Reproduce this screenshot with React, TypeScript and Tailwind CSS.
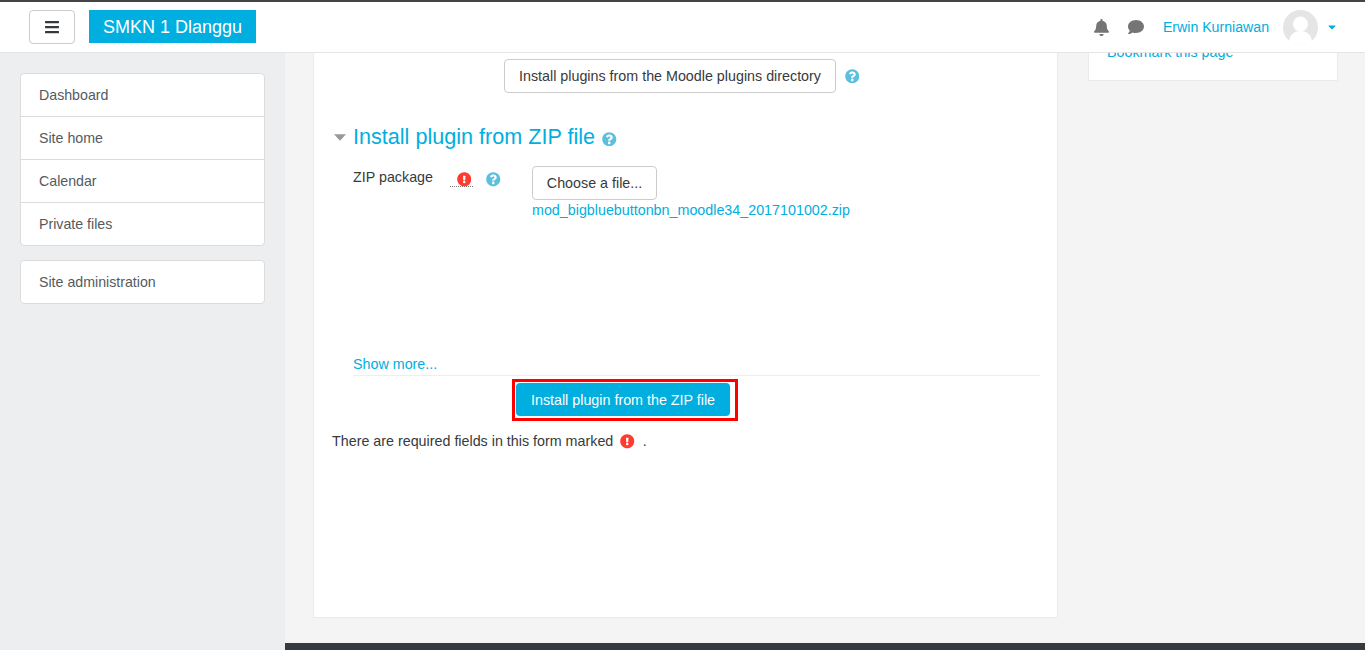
import { FaBars, FaBell, FaComment, FaCaretDown, FaQuestionCircle, FaExclamationCircle } from "react-icons/fa";

const navItems = ["Dashboard", "Site home", "Calendar", "Private files"];

export default function App() {
  return (
    <div className="w-[1365px] h-[650px] overflow-hidden flex flex-col bg-[#f4f4f4] text-[14.3px] leading-[21px] text-[#373a3c] font-['Liberation_Sans',Arial,sans-serif]">
      <header className="h-[53px] shrink-0 flex items-center bg-white border-t-2 border-t-[#444444] border-b border-b-[#e5e5e5] pl-[29px] pr-[27px]">
        <button className="w-[46px] h-[34px] flex items-center justify-center border border-[#cccccc] rounded-[4px] bg-white text-[#373a3c]">
          <FaBars className="w-[14px] h-[16px]" />
        </button>
        <div className="ml-[14px] -mt-[1px] w-[167px] h-[33px] pt-[2px] flex items-center justify-center bg-[#00aee0] text-white text-[18px]">SMKN 1 Dlanggu</div>
        <div className="ml-auto flex items-center">
          <FaBell className="-ml-[1px] w-[17px] h-[17px] text-[#757575]" />
          <FaComment className="ml-[18px] w-[16px] h-[16px] text-[#757575]" />
          <span className="ml-[19px] text-[14.15px] text-[#00aee0]">Erwin Kurniawan</span>
          <svg viewBox="0 0 35 35" className="ml-[14px] w-[35px] h-[35px]">
            <circle cx="17.5" cy="17.5" r="17.5" fill="#e5e5e5" />
            <circle cx="17.5" cy="14" r="7.5" fill="#ffffff" />
            <path d="M6 31c1-7 6-10 11.5-10S28 24 29 31c-3 2.500-7 4-11.500 4S9 33.500 6 31z" fill="#ffffff" />
          </svg>
          <FaCaretDown className="ml-[8px] w-[12px] h-[12px] text-[#00aee0]" />
        </div>
      </header>

      <div className="flex-1 flex min-h-0">
        <aside className="w-[285px] shrink-0 bg-[#eceef0] border-r border-r-[#eeeeee] pt-[20px] pl-[20px] pr-[19px] text-[14.2px] text-[#555a5f]">
          <nav className="bg-white border border-[#dcdcdc] rounded-[4px]">
            {navItems.map((item, i) => (
              <div key={item} className={i > 0 ? "h-[43px] pl-[18px] flex items-center border-t border-t-[#dcdcdc]" : "h-[42px] pl-[18px] flex items-center"}>{item}</div>
            ))}
          </nav>
          <div className="mt-[14px] h-[44px] pl-[18px] flex items-center bg-white border border-[#dcdcdc] rounded-[4px]">Site administration</div>
        </aside>

        <div className="flex-1 min-w-0 flex flex-col">
          <div className="flex-1 min-h-0 flex pl-[28px]">
            <main className="w-[745px] h-[565px] bg-white border border-[#ebebeb] border-t-0 pt-[6px] pl-[18px] pr-[17px]">
              <div className="flex items-center pl-[172px]">
                <button className="h-[34px] px-[14px] border border-[#cccccc] rounded-[4px] bg-white text-[#373a3c]">Install plugins from the Moodle plugins directory</button>
                <FaQuestionCircle className="ml-[9px] w-[14.5px] h-[14.5px] text-[#5bc0de]" />
              </div>

              <div className="mt-[30px] h-[28px] flex items-center">
                <svg viewBox="0 0 13 7" className="ml-[2px] w-[12px] h-[7px]"><path d="M0 0h13L6.500 7z" fill="#999999" /></svg>
                <h2 className="ml-[7px] text-[21.6px] text-[#00aee0] leading-none">Install plugin from ZIP file</h2>
                <FaQuestionCircle className="ml-[7px] mt-[4px] w-[14.5px] h-[14.5px] text-[#5bc0de]" />
              </div>

              <div className="mt-[15px] flex pl-[21px]">
                <div className="w-[179px] shrink-0 flex items-start">
                  <span className="w-[97px] mt-[1px]">ZIP package</span>
                  <span className="mt-[6px] w-[21px] h-[14px] pr-[2px] flex justify-end border-b border-dotted border-b-[#777777] box-content">
                    <FaExclamationCircle className="shrink-0 w-[14.5px] h-[14.5px] text-[#ff3b30]" />
                  </span>
                  <FaQuestionCircle className="ml-[13px] mt-[6px] w-[14.5px] h-[14.5px] text-[#5bc0de]" />
                </div>
                <div>
                  <button className="w-[125px] h-[34px] border border-[#cccccc] rounded-[4px] bg-white text-[#373a3c]">Choose a file...</button>
                  <div className="text-[#00aee0]">mod_bigbluebuttonbn_moodle34_2017101002.zip</div>
                </div>
              </div>

              <div className="mt-[133px] ml-[21px] h-[20px] pb-[1px] flex items-center border-b border-b-[#eeeeee] box-content text-[#00aee0]">Show more...</div>

              <div className="mt-[3px] ml-[180px] w-[226px] h-[42px] border-[3px] border-[#ff0000] pl-[1px] pt-[1px]">
                <button className="w-[214px] h-[33px] pt-[2px] bg-[#00aee0] rounded-[4px] text-white">Install plugin from the ZIP file</button>
              </div>

              <div className="mt-[10px] flex items-center">
                <span>There are required fields in this form marked</span>
                <FaExclamationCircle className="ml-[7px] w-[14.5px] h-[14.5px] text-[#ff3b30]" />
                <span className="ml-[8px]">.</span>
              </div>
            </main>

            <aside className="ml-[30px] w-[250px] h-[28px] overflow-hidden bg-white border border-[#ebebeb] border-t-0 pl-[18px]">
              <div className="-mt-[11px] text-[#00aee0]">Bookmark this page</div>
            </aside>
          </div>
          <footer className="h-[7px] shrink-0 bg-[#373a3c]" />
        </div>
      </div>
    </div>
  );
}
